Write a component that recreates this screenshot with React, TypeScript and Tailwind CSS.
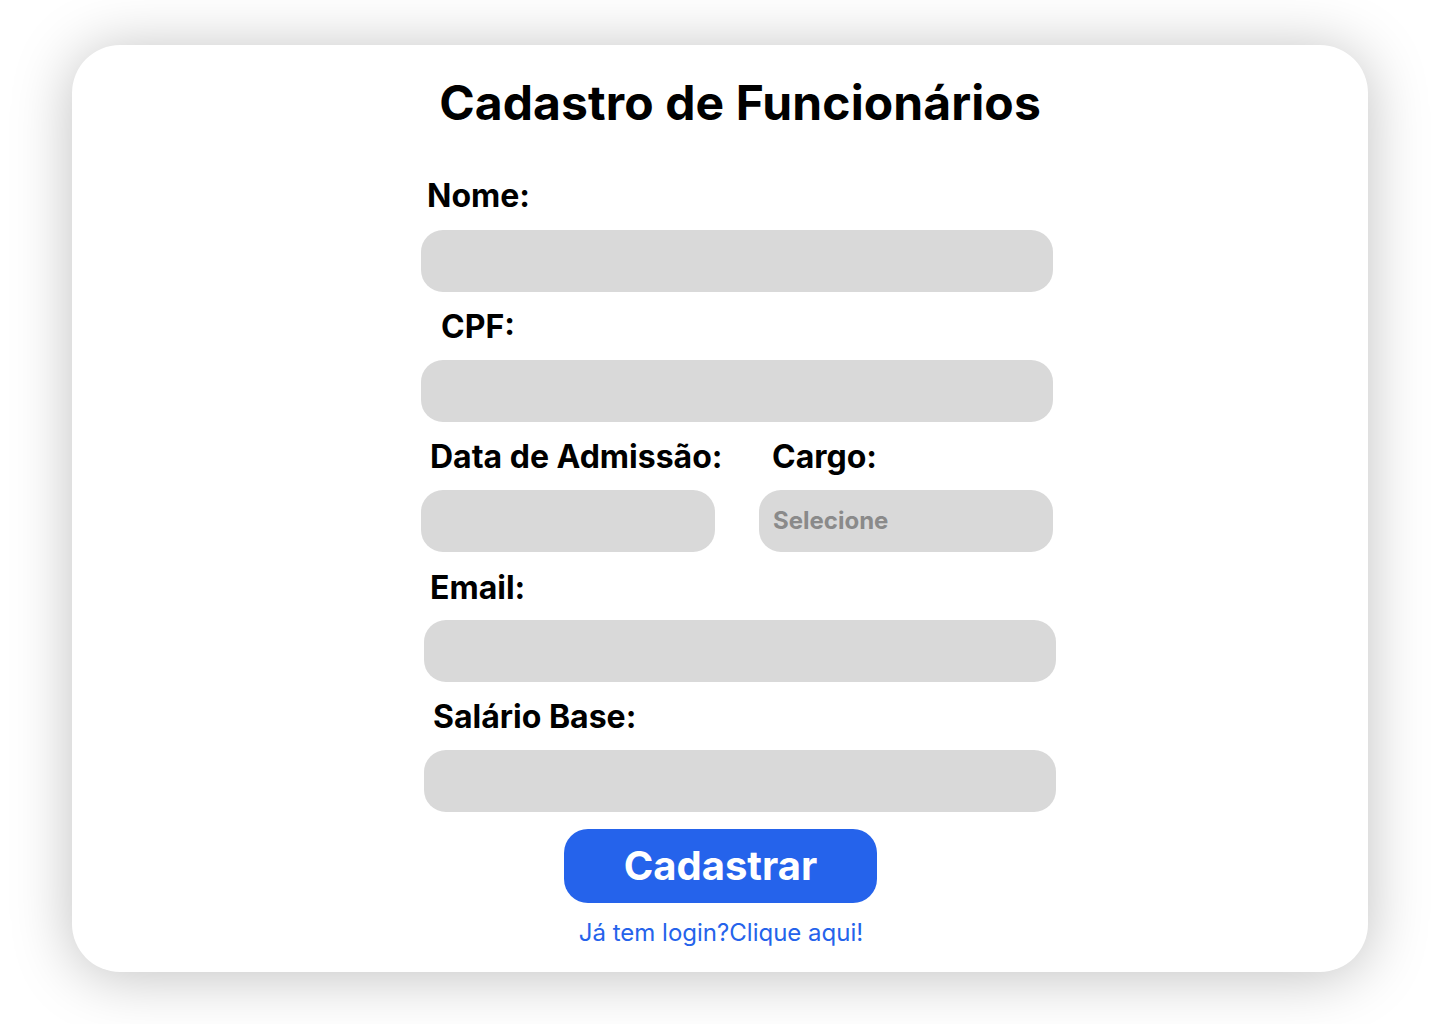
import React from "react";

const font = { fontFamily: "Inter, 'Noto Sans', sans-serif" };

function Label({ children, className = "" }: { children: React.ReactNode; className?: string }) {
  return (
    <label className={"block whitespace-nowrap text-[32px] leading-none font-bold text-black " + className}>{children}</label>
  );
}

function Field({ className = "" }: { className?: string }) {
  return <div className={"h-[62px] rounded-[22px] bg-[#d9d9d9] " + className} />;
}

export default function App() {
  return (
    <div className="min-h-screen w-full bg-white pt-[45px] px-[72px]" style={font}>
      <div className="h-[927px] w-[1296px] rounded-[48px] bg-white shadow-[0_4px_60px_rgba(0,0,0,0.25)] flex flex-col items-center pt-[34px]">
        <h1 className="text-[48px] leading-none font-bold text-black ml-[40px] tracking-[0.1px]">
          Cadastro de Funcionários
        </h1>
        <form className="self-start ml-[349px] w-[635px] mt-[53px] flex flex-col">
          <Label className="ml-[6px]">Nome:</Label>
          <Field className="w-[632px] mt-[18px]" />
          <Label className="ml-[20px] mt-[19px]">CPF:</Label>
          <Field className="w-[632px] mt-[17px]" />
          <div className="flex gap-[44px] mt-[19px]">
            <div className="flex flex-col w-[294px]">
              <Label className="ml-[9px]">Data de Admissão:</Label>
              <Field className="w-[294px] mt-[17px]" />
            </div>
            <div className="flex flex-col w-[294px]">
              <Label className="ml-[13px]">Cargo:</Label>
              <div className="mt-[17px] h-[62px] w-[294px] rounded-[22px] bg-[#d9d9d9] flex items-center pl-[14px]">
                <span className="text-[24px] font-bold text-[#8a8a8a] leading-none">Selecione</span>
              </div>
            </div>
          </div>
          <Label className="ml-[9px] mt-[20px]">Email:</Label>
          <Field className="w-[632px] ml-[3px] mt-[16px]" />
          <Label className="ml-[12px] mt-[19px]">Salário Base:</Label>
          <Field className="w-[632px] ml-[3px] mt-[17px]" />
        </form>
        <button className="mt-[17px] h-[74px] w-[313px] rounded-[24px] bg-[#2563eb] text-white text-[40px] font-bold leading-none ml-[1px]">
          Cadastrar
        </button>
        <a className="mt-[18px] text-[24px] leading-none text-[#2563eb] ml-[2px]">Já tem login?Clique aqui!</a>
      </div>
    </div>
  );
}
